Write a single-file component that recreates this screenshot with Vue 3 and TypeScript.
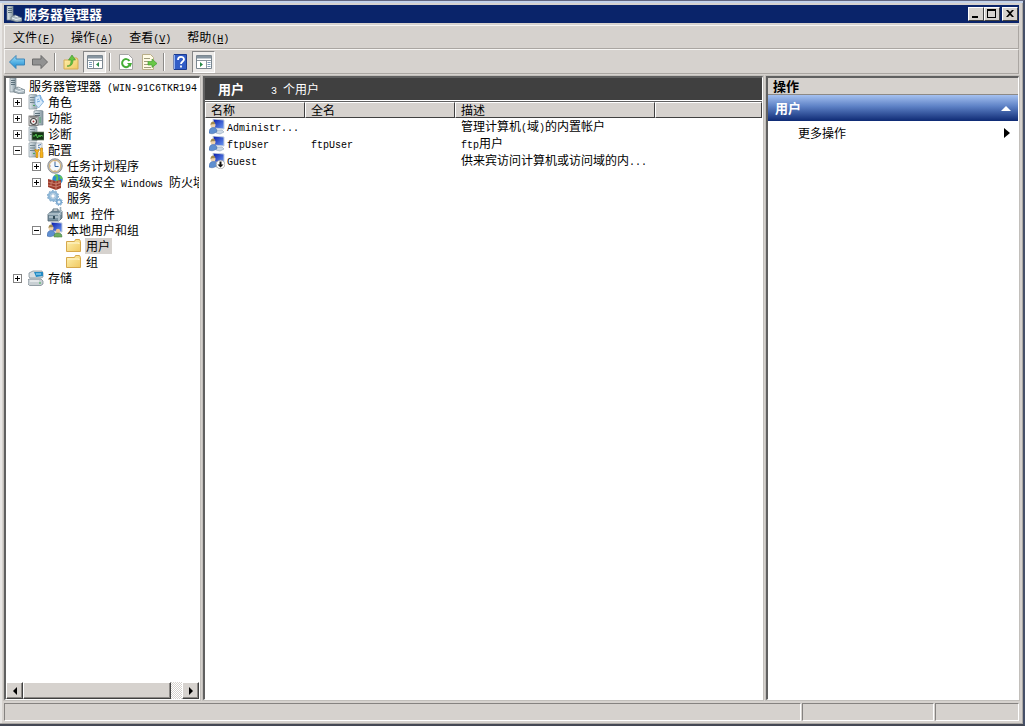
<script setup lang="ts">
import { h, ref } from 'vue'

interface Node {
  label: string
  icon: string
  level: number
  state?: 'open' | 'closed'
}

const menus = [
  { label: '文件', key: 'F' },
  { label: '操作', key: 'A' },
  { label: '查看', key: 'V' },
  { label: '帮助', key: 'H' },
]

const nodes: Node[] = [
  { label: '服务器管理器 (WIN-91C6TKR194', icon: 'server', level: 0 },
  { label: '角色', icon: 'roles', level: 1, state: 'closed' },
  { label: '功能', icon: 'features', level: 1, state: 'closed' },
  { label: '诊断', icon: 'diag', level: 1, state: 'closed' },
  { label: '配置', icon: 'config', level: 1, state: 'open' },
  { label: '任务计划程序', icon: 'clock', level: 2, state: 'closed' },
  { label: '高级安全 Windows 防火墙', icon: 'firewall', level: 2, state: 'closed' },
  { label: '服务', icon: 'gears', level: 2 },
  { label: 'WMI 控件', icon: 'wmi', level: 2 },
  { label: '本地用户和组', icon: 'users', level: 2, state: 'open' },
  { label: '用户', icon: 'folder', level: 3 },
  { label: '组', icon: 'folder', level: 3 },
  { label: '存储', icon: 'storage', level: 1, state: 'closed' },
]
const selected = ref(10)

const users = [
  { name: 'Administr...', full: '', desc: '管理计算机(域)的内置帐户', off: false },
  { name: 'ftpUser', full: 'ftpUser', desc: 'ftp用户', off: false },
  { name: 'Guest', full: '', desc: '供来宾访问计算机或访问域的内...', off: true },
]

/* Sets half-width characters in a fixed-pitch face beside full-width ones. */
function Mixed(props: { s: string }) {
  const runs = props.s.match(/[\x20-\x7e]+|[^\x20-\x7e]+/g) ?? []
  return h(
    'span',
    { class: 'mixed' },
    runs.map((r) => (r.charCodeAt(0) < 127 ? h('span', { class: 'half' }, r) : r)),
  )
}
Mixed.props = ['s']
</script>

<template>
  <div class="window">
    <svg class="defs" aria-hidden="true">
      <defs>
        <linearGradient id="tower" x1="0" x2="1"><stop offset="0" stop-color="#e4ecf0" /><stop offset="1" stop-color="#8496a0" /></linearGradient>
        <linearGradient id="blueArrow" x1="0" x2="0" y1="0" y2="1"><stop offset="0" stop-color="#9fe0fa" /><stop offset="1" stop-color="#1587cf" /></linearGradient>
        <linearGradient id="gold" x1="0" x2="1" y1="0" y2="1"><stop offset="0" stop-color="#fff2b0" /><stop offset="1" stop-color="#f0c860" /></linearGradient>
        <linearGradient id="screen" x1="0" x2="1" y1="0" y2="1"><stop offset="0" stop-color="#0818a8" /><stop offset="1" stop-color="#6c9cf4" /></linearGradient>

        <symbol id="i-tower" viewBox="0 0 16 16">
          <path d="M1 1l5-1 3 1v14H1z" fill="url(#tower)" stroke="#8b9aa2" stroke-width=".7" />
          <path d="M2 3.5h5M2 6h5M2 8.5h5" stroke="#71848e" /><path d="M8 2v12" stroke="#b8c4ca" />
          <rect x="5" y="11" width="2" height="1" fill="#48a860" />
        </symbol>
        <symbol id="i-server" viewBox="0 0 16 16">
          <path d="M1 0h6v14H1z" fill="url(#tower)" stroke="#75858e" stroke-width=".7" />
          <path d="M2 2.500h4M2 4.500h4M2 6.500h4" stroke="#5d717c" />
          <path d="M5 11l4-2 7 3v3l-5 1-6-2z" fill="#a9b7bf" stroke="#6d7b83" stroke-width=".7" />
          <path d="M6 12l4 1.500 5-1M9 10l3 1" fill="none" stroke="#e8f0f4" />
        </symbol>
        <symbol id="i-roles" viewBox="0 0 16 16">
          <use href="#i-tower" />
          <path d="M7 3l5-2 3.5 7-5 6L7 10z" fill="#d7eafa" stroke="#76a8d8" stroke-width=".8" />
          <path d="M12 1l.5 4 3 3M9 6l2-1M9 8l3-1" fill="none" stroke="#5b9bd8" stroke-width=".8" />
        </symbol>
        <symbol id="i-features" viewBox="0 0 16 16">
          <path d="M6 1l5-1 4 1v14H6z" fill="url(#tower)" stroke="#75858e" stroke-width=".7" /><path d="M7 3.500h5M7 5.500h5" stroke="#5d717c" /><path d="M12 7v6" stroke="#4ba466" />
          <rect x="1" y="6" width="9" height="9.500" fill="#dcdcdc" stroke="#666" stroke-width=".8" />
          <path d="M2 7h7" stroke="#555" /><circle cx="5.500" cy="11.500" r="3" fill="#fff" stroke="#444" stroke-width="1.200" /><circle cx="5.500" cy="11.500" r="1" fill="#a33" />
        </symbol>
        <symbol id="i-diag" viewBox="0 0 16 16">
          <use href="#i-tower" />
          <rect x="4" y="6" width="12" height="8" fill="#153517" stroke="#71806f" stroke-width=".7" />
          <path d="M5 10h2l1-2 1.5 4L11 9l1 2 1-2 1 1h1" fill="none" stroke="#52cc50" stroke-width=".9" />
        </symbol>
        <symbol id="i-config" viewBox="0 0 16 16">
          <use href="#i-tower" />
          <path d="M8 1h6v7H8z" fill="#eef2f5" stroke="#8b99a5" stroke-width=".6" /><path d="M10 3.500l3-1M10 5l2 1" stroke="#4f79b0" />
          <path d="M7 7v2l1 1v5.500h2V10l1-1V7l-1 1H8zM12.500 6v3.500l-.5 1V15.500h3v-5l-.5-1V6z" fill="#f7b51d" stroke="#b97a0b" stroke-width=".6" />
        </symbol>
        <symbol id="i-clock" viewBox="0 0 16 16">
          <circle cx="8" cy="8" r="7.300" fill="#b9bcc1" stroke="#777" stroke-width=".7" /><circle cx="8" cy="8" r="5.600" fill="#f4f8fc" stroke="#d5a64c" stroke-width=".7" />
          <path d="M8 4v4.500h3.500" fill="none" stroke="#3567a0" /><path d="M8 3v1M8 12v1M3 8h1" stroke="#a66" stroke-width=".7" />
        </symbol>
        <symbol id="i-firewall" viewBox="0 0 16 16">
          <circle cx="10.500" cy="5.500" r="5.200" fill="#2f8bcc" /><path d="M8 2c2-2 3 1 2 3s3 1 2 4M13 2l2 3" fill="none" stroke="#63c456" stroke-width="2" />
          <path d="M1 5l8 2 5-1v8l-5 2-8-3z" fill="#9c3b2c" /><path d="M1 8l8 2 5-2M1 11l8 2 5-2M5 6v3M9 7v9M4 9v3M12 7v3" fill="none" stroke="#e3a591" stroke-width=".6" />
        </symbol>
        <symbol id="i-gears" viewBox="0 0 16 16">
          <circle cx="6" cy="6" r="4" fill="none" stroke="#8fb8d8" stroke-width="2.600" /><circle cx="6" cy="6" r="5.500" fill="none" stroke="#6b9ac2" stroke-width="1" stroke-dasharray="1.700 1.750" />
          <circle cx="6" cy="6" r="2.200" fill="#fff" stroke="#5e91bd" stroke-width=".6" />
          <circle cx="12" cy="12" r="2.300" fill="#e9f3fb" stroke="#75a6d0" stroke-width="1.500" /><circle cx="12" cy="12" r="3.500" fill="none" stroke="#5588b5" stroke-width=".8" stroke-dasharray="1.200 1.500" />
        </symbol>
        <symbol id="i-wmi" viewBox="0 0 16 16">
          <path d="M1 8l4-3h10v7l-3 3H1z" fill="#78909e" stroke="#4d606c" stroke-width=".8" /><path d="M1 8h11l3-3M12 8v7M2 11h9" fill="none" stroke="#d8e4ea" />
          <path d="M6 5V3h5v2" fill="none" stroke="#536874" /><path d="M13.500 1v8" stroke="#9bb0bc" stroke-width="1.600" /><path d="M6 10h2v3H6z" fill="#314955" />
        </symbol>
        <symbol id="i-user" viewBox="0 0 16 16">
          <path d="M4 0l11 1v9L5 9z" fill="url(#screen)" stroke="#c3cddd" /><path d="M7 11l6 0 2 2-4 2-4-1z" fill="#cdd9e6" stroke="#8fa4ba" stroke-width=".6" />
          <circle cx="4" cy="6" r="2.500" fill="#efd3ae" /><path d="M1.500 6c0-4.500 5-4.500 4.500-1-2 .5-3-.5-4.500 1z" fill="#a08a50" />
          <path d="M0 14c0-4 2-5.500 4-5.500s4 1 4 4c-2 2-5 3-8 1.500z" fill="#5f8fd0" stroke="#3d619f" stroke-width=".5" />
        </symbol>
        <symbol id="i-users" viewBox="0 0 16 16">
          <use href="#i-user" /><circle cx="11" cy="9" r="2.200" fill="#eac193" /><path d="M7 15c0-4 2-4 4-4s4 1 4 4z" fill="#6fae60" stroke="#477a3b" stroke-width=".5" />
        </symbol>
        <symbol id="i-folder" viewBox="0 0 16 16">
          <path d="M.5 3.500h8l1-2h4l1 2v10H.5z" fill="url(#gold)" stroke="#d6a84c" /><path d="M1.500 5h11.500v1" fill="none" stroke="#fff8d4" />
        </symbol>
        <symbol id="i-storage" viewBox="0 0 16 16">
          <path d="M1 3l4-2h9l1 2v4l-2 1H2L1 7z" fill="#d7dde1" stroke="#7a8790" stroke-width=".7" /><path d="M6 2h9v4l-7 1z" fill="#258bc4" /><path d="M8 4h5" stroke="#aee6ff" />
          <path d="M1 9h12l2 2v3l-2 1.500H1.500L0 14v-4z" fill="#c9d0d4" stroke="#71808a" stroke-width=".7" /><path d="M2 11h9" stroke="#fff" /><rect x="11" y="12.500" width="2" height="1" fill="#3ab051" />
        </symbol>
      </defs>
    </svg>

    <header class="title">
      <svg class="ico" aria-hidden="true"><use href="#i-server" /></svg>
      <h1>服务器管理器</h1>
      <div class="caption">
        <button aria-label="最小化"><svg viewBox="0 0 12 10"><path d="M2 7h6v2H2z" /></svg></button>
        <button aria-label="最大化"><svg viewBox="0 0 12 10"><path d="M1 0h9v9H1zM2 2v6h7V2z" fill-rule="evenodd" /></svg></button>
        <button class="close" aria-label="关闭"><svg viewBox="0 0 12 10"><path d="M2 1h2l2 2 2-2h2L7 4.500 10 8H8L6 6 4 8H2l3-3.500z" /></svg></button>
      </div>
    </header>

    <nav class="menu">
      <button v-for="m in menus" :key="m.key">{{ m.label }}<span class="key">(<u>{{ m.key }}</u>)</span></button>
    </nav>

    <div class="tools" role="toolbar">
      <button aria-label="后退"><svg viewBox="0 0 16 16"><path d="M.5 8L7 1.500v3.500h8.500v6H7v3.500z" fill="url(#blueArrow)" stroke="#3f86b8" /></svg></button>
      <button aria-label="前进"><svg viewBox="0 0 16 16"><path d="M15.500 8L9 1.500v3.500H.5v6H9v3.500z" fill="#929292" stroke="#6a6a6a" /></svg></button>
      <i class="sep"></i>
      <button aria-label="上一级"><svg viewBox="0 0 16 16"><path d="M1 6h6l1-2h6l1 2v9H1z" fill="url(#gold)" stroke="#d6ac55" /><path d="M4 12c3 0 4-2 4-6H5.500L9 1 12.500 6H10c0 4-2 7-6 6z" fill="#65c43f" stroke="#39902b" stroke-width=".6" /></svg></button>
      <button class="pressed" aria-label="显示/隐藏控制台树"><svg viewBox="0 0 16 16"><path d="M.5 1.500h15v13H.5z" fill="#fff" stroke="#7b8790" /><path d="M1 2h14v2.500H1z" fill="#8795a0" /><path d="M1 6.500h14M6.500 7v7" stroke="#8b979f" /><path d="M2 8.500h3M2 10.500h3M2 12.500h3" stroke="#7a9cba" /><path d="M12 8v5L9 10.500z" fill="#278a49" /></svg></button>
      <i class="sep"></i>
      <button aria-label="刷新"><svg viewBox="0 0 16 16"><path d="M1.500.5h9l4 4v11h-13z" fill="#fff" stroke="#a4a4a4" /><path d="M11.500 7A4 4 0 1 0 12 10" fill="none" stroke="#44ad35" stroke-width="2" /><path d="M9 9h5l-1.500 4z" fill="#44ad35" /></svg></button>
      <button aria-label="导出列表"><svg viewBox="0 0 16 16"><path d="M1.500.5h8l3 3v12h-11z" fill="#fffbe5" stroke="#b9ae88" /><path d="M3 4.500h6M3 7.500h4M3 10.500h4M3 13.500h7" stroke="#9f9c7c" /><path d="M7 7.500h4V5l5 4.500-5 4V11H7z" fill="#68c847" stroke="#36952a" stroke-width=".6" /></svg></button>
      <i class="sep"></i>
      <button aria-label="帮助"><svg viewBox="0 0 16 16"><path d="M2 .5h12.500v15H2z" fill="#315dc7" stroke="#1b3b90" /><path d="M2.500 1v14" stroke="#92b3f2" /><path d="M6 6c0-4 6-4 6-.5 0 2-3 2-3 4.500M9 11.500v2" fill="none" stroke="#fff" stroke-width="1.800" /></svg></button>
      <button class="pressed" aria-label="显示/隐藏操作窗格"><svg viewBox="0 0 16 16"><path d="M.5 1.500h15v13H.5z" fill="#fff" stroke="#7b8790" /><path d="M1 2h14v2.500H1z" fill="#8795a0" /><path d="M1 6.500h14M10.500 7v7" stroke="#8b979f" /><path d="M11.500 8.500h3M11.500 10.500h3M11.500 12.500h3" stroke="#7a9cba" /><path d="M4 8v5l3-2.500z" fill="#278a49" /></svg></button>
    </div>

    <main class="panes">
      <section class="tree">
        <ul>
          <li v-for="(n, i) in nodes" :key="i" :class="'l' + n.level">
            <button v-if="n.state" class="box" :class="n.state" :aria-label="n.state === 'open' ? '折叠' : '展开'"></button>
            <svg class="ico" aria-hidden="true"><use :href="'#i-' + n.icon" /></svg>
            <button class="label" :class="{ on: i === selected }" @click="selected = i"><Mixed :s="n.label" /></button>
          </li>
        </ul>
        <div class="scroll">
          <button class="raised" aria-label="向左"><svg viewBox="0 0 8 8"><path d="M6 0v8L2 4z" /></svg></button>
          <div class="track"><div class="thumb raised"></div></div>
          <button class="raised" aria-label="向右"><svg viewBox="0 0 8 8"><path d="M2 0v8l4-4z" /></svg></button>
        </div>
      </section>

      <section class="list">
        <div class="dark"><h2>用户</h2><Mixed s="3 个用户" /></div>
        <table>
          <colgroup><col class="c1" /><col class="c2" /><col class="c3" /><col /></colgroup>
          <thead><tr><th>名称</th><th>全名</th><th>描述</th><td></td></tr></thead>
          <tbody>
            <tr v-for="u in users" :key="u.name">
              <td class="name">
                <div class="cell">
                  <svg class="ico" viewBox="0 0 16 16" aria-hidden="true">
                    <use href="#i-user" />
                    <g v-if="u.off"><circle cx="11.500" cy="11.500" r="4.300" fill="#fff" stroke="#9a9a9a" stroke-width=".7" /><path d="M10.500 8.500h2v3h2l-3 3-3-3h2z" fill="#111" /></g>
                  </svg>
                  <Mixed :s="u.name" />
                </div>
              </td>
              <td><div class="cell"><Mixed :s="u.full" /></div></td>
              <td><div class="cell"><Mixed :s="u.desc" /></div></td>
              <td></td>
            </tr>
          </tbody>
        </table>
      </section>

      <aside class="actions">
        <h2>操作</h2>
        <button class="group">用户<svg viewBox="0 0 10 6"><path d="M0 6l5-5 5 5z" fill="#fff" /></svg></button>
        <button class="more">更多操作<svg viewBox="0 0 6 10"><path d="M0 0v10l6-5z" /></svg></button>
      </aside>
    </main>

    <footer class="status"><div></div><div></div><div></div></footer>
  </div>
</template>

<style>
body {
  background: #d6d2ce;
}
</style>

<style scoped>
* {
  box-sizing: border-box;
}
.window {
  display: flex;
  flex-direction: column;
  height: 100vh;
  padding: 4px 4px 3px 4px;
  border-top: 1px solid #626680;
  border-right: 2px solid #465068;
  border-bottom: 2px solid #444854;
  background: #d6d2ce;
  box-shadow: inset 0 2px #c3d2ea, inset -1px -1px #aaa7a4, inset 2px 0 #e8e6e4;
  color: #000;
  font: 12px/16px "Noto Sans CJK SC", sans-serif;
}
.defs {
  position: absolute;
  width: 0;
  height: 0;
}
button {
  margin: 0;
  padding: 0;
  border: 0;
  background: none;
  color: inherit;
  font: inherit;
  text-align: left;
  white-space: nowrap;
}
h1,
h2 {
  margin: 0;
  font-size: 13px;
  line-height: 16px;
  font-weight: 700;
}
.mixed {
  white-space: pre;
}
.mixed :deep(.half),
.key {
  font-family: "Liberation Mono", monospace;
  font-size: 10px;
  line-height: 12px;
}
.ico {
  flex: none;
  width: 16px;
  height: 16px;
}
.title {
  display: flex;
  align-items: center;
  flex: none;
  height: 18px;
  padding: 0 1px 0 2px;
  background: #0a246a;
  color: #fff;
}
.title h1 {
  margin-left: 2px;
}
.caption {
  display: flex;
  margin-left: auto;
}
.caption button {
  width: 16px;
  height: 14px;
  padding: 1px;
  border: 1px solid;
  border-color: #fff #404040 #404040 #fff;
  background: #d6d2ce;
}
.caption .close {
  margin-left: 2px;
}
.caption svg {
  display: block;
  width: 12px;
  height: 10px;
}
.menu {
  display: flex;
  align-items: center;
  flex: none;
  height: 24px;
  margin-top: 2px;
  border: 1px solid;
  border-color: #f6f5f3 #aaa6a2 #aaa6a2 #f6f5f3;
}
.menu button {
  padding: 0 8px;
}
.tools {
  display: flex;
  align-items: center;
  flex: none;
  height: 25px;
  border: 1px solid;
  border-color: #f6f5f3 #aaa6a2 #aaa6a2 #f6f5f3;
}
.tools button {
  display: grid;
  place-items: center;
  width: 23px;
  height: 22px;
}
.tools svg {
  width: 16px;
  height: 16px;
}
.tools .pressed {
  margin-left: 1px;
  border: 1px solid;
  border-color: #858585 #fff #fff #858585;
  background: #eeecea;
}
.sep {
  width: 2px;
  height: 18px;
  margin: 0 3px;
  border-left: 1px solid #8c8a88;
  border-right: 1px solid #fff;
}
.panes {
  display: grid;
  grid-template-columns: 196px minmax(0, 1fr) 253px;
  gap: 3px;
  flex: 1;
  min-height: 0;
  margin-top: 2px;
}
.panes > * {
  min-width: 0;
  border: solid #fff;
  border-width: 2px 1px 1px 2px;
  border-top-color: #606060;
  border-left-color: #606060;
  outline: 1px solid #c2bfbb;
  background: #fff;
}
.tree {
  display: flex;
  flex-direction: column;
}
.tree ul {
  flex: 1;
  min-height: 0;
  margin: 0;
  padding: 0 0 0 3px;
  overflow: hidden;
  list-style: none;
}
.tree li {
  display: flex;
  align-items: center;
  height: 16px;
}
.tree .l1 {
  padding-left: 19px;
}
.tree .l2 {
  padding-left: 38px;
}
.tree .l3 {
  padding-left: 57px;
}
.box {
  flex: none;
  width: 9px;
  height: 9px;
  margin-left: -15px;
  margin-right: 6px;
  border: 1px solid #848484;
  background: linear-gradient(#000, #000) center / 5px 1px no-repeat;
}
.box.closed {
  background: linear-gradient(#000, #000) center / 5px 1px no-repeat, linear-gradient(#000, #000) center / 1px 5px no-repeat;
}
.label {
  height: 16px;
  margin-left: 3px;
  padding: 0 1px;
}
.label.on {
  padding-right: 2px;
  background: #d6d2ce;
}
.scroll {
  display: flex;
  flex: none;
  height: 17px;
}
.raised {
  border: 1px solid;
  border-color: #fff #404040 #404040 #fff;
  background: #d6d2ce;
  box-shadow: inset -1px -1px #8c8986;
}
.scroll button {
  display: grid;
  place-items: center;
  width: 17px;
}
.scroll svg {
  width: 8px;
  height: 8px;
}
.track {
  flex: 1;
  background: repeating-conic-gradient(#fff 0 25%, #d6d2ce 0 50%) 0 0 / 2px 2px;
}
.thumb {
  width: 93%;
  height: 17px;
}
.dark {
  display: flex;
  align-items: center;
  height: 22px;
  padding-left: 13px;
  background: #404040;
  color: #fff;
}
.dark h2 {
  width: 53px;
}
table {
  width: 100%;
  margin-top: 1px;
  border-top: 1px solid #606060;
  border-spacing: 0;
  table-layout: fixed;
}
.c1 {
  width: 100px;
}
.c2 {
  width: 150px;
}
.c3 {
  width: 200px;
}
td,
th {
  height: 17px;
  padding: 0 0 0 6px;
  overflow: hidden;
  font-weight: 400;
  text-align: left;
  white-space: nowrap;
}
thead th,
thead td {
  height: 16px;
  padding-left: 5px;
  border: 1px solid;
  border-color: #fff #404040 #404040 #fff;
  background: #d6d2ce;
  line-height: 14px;
}
td.name {
  padding-left: 4px;
}
.cell {
  display: flex;
  align-items: center;
  gap: 2px;
  height: 16px;
}
.actions h2 {
  height: 17px;
  padding-left: 5px;
  border-bottom: 1px solid #8c8986;
  background: #d6d2ce;
}
.actions button {
  display: flex;
  align-items: center;
  justify-content: space-between;
  width: 100%;
  height: 24px;
}
.actions .group {
  height: 26px;
  padding: 0 7px;
  background: linear-gradient(#a5c1f0, #5b7fc4 45%, #0e2a74);
  color: #fff;
  font-size: 13px;
  font-weight: 700;
}
.group svg {
  width: 10px;
  height: 6px;
}
.actions .more {
  padding: 0 8px 0 30px;
}
.more svg {
  width: 6px;
  height: 10px;
}
.status {
  display: grid;
  grid-template-columns: minmax(0, 1fr) 132px 84px;
  gap: 1px;
  flex: none;
  height: 18px;
  margin-top: 3px;
}
.status div {
  border: 1px solid;
  border-color: #858280 #fff #fff #858280;
}
</style>
